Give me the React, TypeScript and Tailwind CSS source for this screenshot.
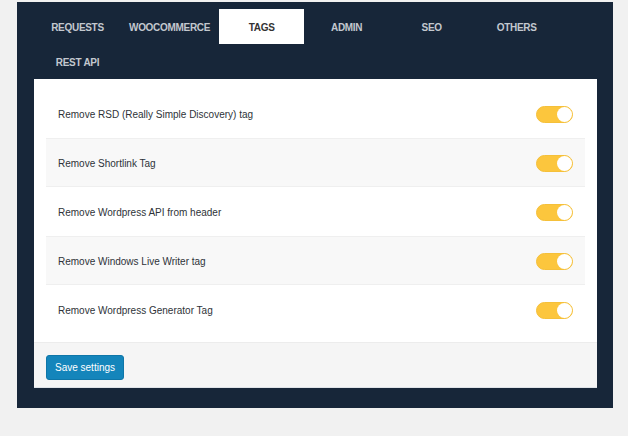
import { useState } from "react";

const tabs = ["REQUESTS", "WOOCOMMERCE", "TAGS", "ADMIN", "SEO", "OTHERS", "REST API"];

const options = [
  "Remove RSD (Really Simple Discovery) tag",
  "Remove Shortlink Tag",
  "Remove Wordpress API from header",
  "Remove Windows Live Writer tag",
  "Remove Wordpress Generator Tag",
];

function Toggle({ on, onClick }: { on: boolean; onClick: () => void }) {
  return (
    <button
      onClick={onClick}
      className={`relative w-[37px] h-[17px] rounded-full border ${
        on ? "bg-[#fcc63d] border-[#f5c03a]" : "bg-gray-300 border-gray-300"
      }`}
    >
      <span
        className={`absolute top-[0px] w-[15px] h-[15px] rounded-full bg-white ${
          on ? "right-[0px]" : "left-[0px]"
        }`}
      />
    </button>
  );
}

export default function App() {
  const [active, setActive] = useState("TAGS");
  const [values, setValues] = useState<boolean[]>(options.map(() => true));

  return (
    <div
      className="min-h-[436px] bg-[#f1f1f1] pt-[2px] pl-[17px]"
      style={{ fontFamily: '"Liberation Sans", Arial, sans-serif' }}
    >
      <div className="w-[596px] bg-[#172639] pt-[7px] pl-[17px] pr-[16px] pb-[20px]">
        <div className="flex flex-wrap pl-px">
          {tabs.map((t) => (
            <button
              key={t}
              onClick={() => setActive(t)}
              className={`h-[35px] min-w-[85px] px-[9px] pt-[2px] text-[10px] tracking-[-0.3px] font-bold text-center ${
                active === t ? "bg-white text-[#333]" : "text-[#c3c8cf]"
              }`}
            >
              {t}
            </button>
          ))}
        </div>
        <div className="bg-white pt-[10px] border-b border-[#dfe3e8]">
          <div className="px-[12px]">
            {options.map((o, i) => (
              <div
                key={o}
                className={`h-[49px] flex items-center justify-between pl-[12px] pr-[12px] pt-px ${
                  i % 2 === 1 ? "bg-[#f8f8f8] border-y border-[#efefef]" : ""
                }`}
              >
                <span className="text-[10px] text-[#2e3338]">{o}</span>
                <Toggle
                  on={values[i]}
                  onClick={() =>
                    setValues((v) => v.map((x, j) => (j === i ? !x : x)))
                  }
                />
              </div>
            ))}
          </div>
          <div className="mt-[8px] h-[45px] bg-[#f5f5f5] border-t border-[#ececec] px-[12px] pt-[11px]">
            <button className="h-[25px] w-[78px] rounded-[3px] bg-[#1485bb] border border-[#0f76a8] text-white text-[10px]">
              Save settings
            </button>
          </div>
        </div>
      </div>
    </div>
  );
}
